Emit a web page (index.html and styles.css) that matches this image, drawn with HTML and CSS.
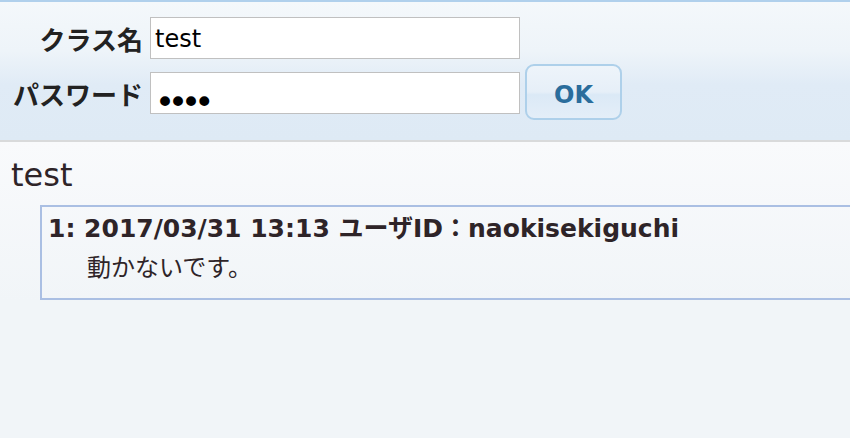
FILE: index.html
```html
<!DOCTYPE html>
<html lang="ja">
<head>
<meta charset="utf-8">
<title>test</title>
<link rel="stylesheet" href="styles.css">
</head>
<body>
<header class="login">
  <form class="login-form">
    <div class="fields">
      <div class="field-row">
        <label class="field-label" for="cls">クラス名</label>
        <input class="field-input" id="cls" type="text" value="test">
      </div>
      <div class="field-row">
        <label class="field-label" for="pw">パスワード</label>
        <input class="field-input field-password" id="pw" type="password" value="test">
      </div>
    </div>
    <button class="ok-button" type="button">OK</button>
  </form>
</header>
<main class="content">
  <h1 class="class-title">test</h1>
  <div class="post">
    <div class="post-head">1: 2017/03/31 13:13 ユーザID：naokisekiguchi</div>
    <div class="post-body">動かないです。</div>
  </div>
</main>
</body>
</html>
```
FILE: styles.css
```css
html, body {
  margin: 0;
  padding: 0;
}
body {
  font-family: "DejaVu Sans", "Noto Sans CJK JP", sans-serif;
  color: #2e2428;
  background: #f1f5f8;
  overflow: hidden;
  height: 438px;
}
.login {
  border-top: 2px solid #b0d0ec;
  border-bottom: 2px solid #d9dadb;
  background: linear-gradient(to bottom, #f4f8fb 0%, #eef4f9 35%, #e0ebf6 60%, #deeaf5 100%);
  box-sizing: border-box;
  height: 142px;
  padding-top: 15px;
}
.login-form {
  display: flex;
  align-items: flex-start;
}
.fields {
  display: flex;
  flex-direction: column;
  gap: 13px;
}
.field-row {
  display: flex;
  align-items: center;
}
.field-label {
  width: 150px;
  text-align: right;
  font-family: "Noto Sans CJK JP", sans-serif;
  font-weight: bold;
  font-size: 26px;
  padding-right: 7px;
  box-sizing: border-box;
  color: #222;
}
.field-input {
  width: 370px;
  height: 42px;
  box-sizing: border-box;
  border: 1px solid #c0c0c0;
  background: #fff;
  font-family: "DejaVu Sans", "Noto Sans CJK JP", sans-serif;
  font-size: 24px;
  padding: 1px 5px 0 4px;
  margin: 0;
  color: #000;
  outline: none;
}
.field-password {
  font-size: 34px;
  letter-spacing: -7px;
  padding: 17px 5px 0 4px;
}
.ok-button {
  margin: 47px 0 0 5px;
  width: 97px;
  height: 56px;
  box-sizing: border-box;
  border: 2px solid #aed0ea;
  border-radius: 9px;
  background: linear-gradient(to bottom, #eef4fa 0%, #e6eff8 50%, #dbe9f6 55%, #e4eef8 100%);
  color: #2a6d9c;
  font-family: "DejaVu Sans", sans-serif;
  font-weight: bold;
  font-size: 24px;
  padding: 5px 0 0 0;
}
.content {
  background: linear-gradient(to bottom, #f9fafc 0px, #f1f5f8 160px, #f1f5f8 100%);
  height: 296px;
  padding-top: 13px;
  box-sizing: border-box;
}
.class-title {
  margin: 0 0 10px 11px;
  font-weight: normal;
  font-size: 32px;
  line-height: 40px;
}
.post {
  margin-left: 40px;
  height: 95px;
  box-sizing: border-box;
  border: 2px solid #aabfe3;
  border-right: none;
  padding: 4px 6px;
}
.post-head {
  font-weight: bold;
  font-size: 25px;
  line-height: 36px;
}
.post-body {
  font-family: "Noto Sans CJK JP", sans-serif;
  font-size: 24px;
  line-height: 36px;
  padding-left: 39px;
  padding-top: 1px;
}
```
